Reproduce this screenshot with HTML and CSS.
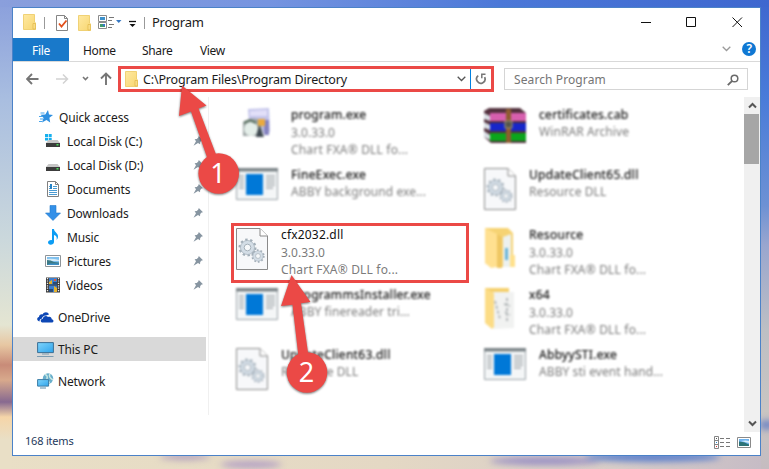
FILE: index.html
```html
<!DOCTYPE html>
<html lang="en">
<head>
<meta charset="utf-8">
<title>Program</title>
<link rel="stylesheet" href="styles.css">
</head>
<body>
<svg class="defs" width="0" height="0" aria-hidden="true">
  <defs>
    <linearGradient id="fold" x1="0" y1="0" x2="1" y2="1"><stop offset="0" stop-color="#ffe9a2"/><stop offset="1" stop-color="#f7d670"/></linearGradient>
    <linearGradient id="scr" x1="0" y1="0" x2="1" y2="1"><stop offset="0" stop-color="#7fd4fb"/><stop offset="1" stop-color="#2fa4ec"/></linearGradient>
    <symbol id="folder" viewBox="0 0 13 16"><path d="M.5.500H11.500V8l1.200 1V15.500H.5z" fill="url(#fold)" stroke="#ecc95f" stroke-width=".8"/><path d="M10 9.500V15h2.400V9.500z" fill="#fbe08a" stroke="#dfb648" stroke-width=".7"/></symbol>
    <symbol id="pin" viewBox="0 0 10 10"><path d="M5.800 0L10 4.200 8.600 4.600 7.200 6.100 7 8.200 5 7 .500 9.800 3 5.200 1.600 3.200 3.800 3 5.300 1.500z" fill="#8795a1"/></symbol>
    <symbol id="gear" viewBox="-10 -10 20 20"><circle r="5.600" fill="none" stroke="#d3dde6" stroke-width="4"/><circle r="8.300" fill="none" stroke="#a3afb9" stroke-width="2.400" stroke-dasharray="2.500 2.710"/><circle r="7.400" fill="none" stroke="#aab6c0" stroke-width=".8"/><circle r="3.500" fill="#f6f8fa" stroke="#99a6b0" stroke-width=".9"/></symbol>
    <symbol id="dll" viewBox="0 0 32 42"><path d="M.5.500H24L31.500 8V41.500H.5z" fill="#f7f8fa" stroke="#8a8a8a"/><path d="M24 .500V8h7.500" fill="#fff" stroke="#8a8a8a"/><use href="#gear" x="2" y="10" width="19" height="19"/><use href="#gear" x="15" y="21" width="14" height="14"/></symbol>
    <symbol id="exe" viewBox="0 0 42 32"><path d="M.5.500h41v31H.5z" fill="#f4f6f7" stroke="#9aa3a8"/><path d="M0 0h42v3.500H0z" fill="#7d8589"/><path d="M10 6h17v21H10z" fill="#0078d7"/><path d="M3 8h5M3 11h5M3 14h5M3 17h5M3 20h5M30 8h9M30 11h9M30 14h9M30 17h9M30 20h7" stroke="#a8aeb2" stroke-width="1.500"/></symbol>
    <symbol id="picture" viewBox="0 0 16 12"><path d="M.5.500h15v11H.5z" fill="#fff" stroke="#8e9499"/><path d="M2 2h12v8H2z" fill="#7fc0ee"/><path d="M2 4q5-1 12 1v1H2z" fill="#d6ecf8"/><path d="M2 5q4 0 7 2l5 .500V10H2z" fill="#3c7a86"/><path d="M5 8.500h9V10H2z" fill="#3d8fc7"/></symbol>
  </defs>
</svg>

<div class="desktop">
  <div class="cloud c1"></div><div class="cloud c2"></div><div class="cloud c3"></div><div class="cloud c4"></div><div class="cloud c5"></div>
  <main class="window">
    <header class="titlebar">
      <svg class="quick" width="130" height="20" viewBox="0 0 130 20">
        <use href="#folder" x="0" y="1" width="13" height="16"/>
        <path d="M21.500 4v12M121.500 4v12" stroke="#999"/>
        <path d="M33.500 2.500h8l3 3v12h-11z" fill="#fff" stroke="#858585"/><path d="M41.500 2.500v3h3" fill="none" stroke="#858585"/><path d="M36 10.500l2.500 3 5-6" fill="none" stroke="#e2501c" stroke-width="1.800"/>
        <use href="#folder" x="55" y="2" width="13" height="16"/>
        <path d="M75.500 2.500h8v6h-8zM75.500 9.500h8v6h-8z" fill="#fff" stroke="#8b8b8b"/><path d="M77 4h5v3h-5z" fill="#3d91cc"/><path d="M77 11h5v3h-5z" fill="#3f9a70"/><path d="M80 11h2v2h-2z" fill="#3974d1"/><path d="M86 4.500h5M85 7.500h4M86 11.500h5M85 14.500h4" stroke="#777"/>
        <path d="M93 7h5.500l-2.750 3z" fill="#3778c2"/><path d="M106 8.500h7" stroke="#111" stroke-width="1.300"/><path d="M106.500 11h6l-3 3z" fill="#111"/>
      </svg>
      <span class="title">Program</span>
      <svg class="controls" width="102" height="14" viewBox="0 0 102 14"><path d="M0 7.500h10M45.500 2.500h9v9h-9zM91.500 2.500l9.500 9.500M101 2.500L91.500 12" fill="none" stroke="#111"/></svg>
    </header>
    <nav class="ribbon">
      <span class="file">File</span><span class="tab home">Home</span><span class="tab share">Share</span><span class="tab view">View</span>
      <svg class="expand" width="9" height="6" viewBox="0 0 9 6"><path d="M.7.800L4.500 4.500 8.300.800" fill="none" stroke="#9a9a9a" stroke-width="1.300"/></svg>
      <span class="help">?</span>
    </nav>
    <div class="addressrow">
      <svg class="arrows" width="87" height="16" viewBox="0 0 87 16">
        <path d="M12.500 8H1.500M6 3L1 8l5 5" fill="none" stroke="#757575" stroke-width="1.900"/>
        <path d="M30 8h11M37 3.500L41.500 8 37 12.500" fill="none" stroke="#d2d2d2" stroke-width="1.500"/>
        <path d="M57 6L59.500 8.500 62 6" fill="none" stroke="#777" stroke-width="1.600"/>
        <path d="M80 14V3M75 7.500l5-5 5 5" fill="none" stroke="#757575" stroke-width="1.900"/>
      </svg>
      <div class="address">
        <svg width="13" height="16"><use href="#folder" width="13" height="16"/></svg>
        <span class="path">C:\Program Files\Program Directory</span>
        <svg class="drop" width="9" height="6" viewBox="0 0 9 6"><path d="M.7.800L4.500 4.500 8.300.800" fill="none" stroke="#555" stroke-width="1.300"/></svg>
        <span class="reload"><svg width="12" height="12" viewBox="0 0 12 12"><path d="M3.200 2.700A4.200 4.200 0 1 0 9.600 4.200" fill="none" stroke="#777" stroke-width="1.700"/><path d="M10.500 1.300H6.800v4" fill="none" stroke="#777" stroke-width="1.500"/></svg></span>
      </div>
      <div class="search"><span>Search Program</span><svg width="12" height="12" viewBox="0 0 12 12"><circle cx="7.500" cy="4.500" r="3.300" fill="none" stroke="#6a6a6a" stroke-width="1.500"/><path d="M5.200 6.800L.8 11.200" stroke="#6a6a6a" stroke-width="1.900"/></svg></div>
    </div>
    <div class="body">
      <aside class="sidebar">
        <div class="row top"><svg width="16" height="16" viewBox="0 0 16 16"><path d="M9 1l1 4.500 4 .500-3.600 2.700.8 4.900-3.700-2.500L3 13.500l1.600-4.600L1.500 5.800l4.800-.3z" fill="#2d8fe0"/><path d="M1.500 4h4M0 7.500h4M1 10h3M0 12.500h3" stroke="#45a4ec" stroke-width="1.200"/></svg><span>Quick access</span></div>
        <div class="row sub"><svg width="16" height="16" viewBox="0 0 16 16"><path d="M0 1h3v3H0zM3.700 1h3v3h-3zM0 4.700h3v2.800H0zM3.700 4.700h3v2.800h-3z" fill="#17b0ee"/><path d="M3.500 7h9L15 10H1z" fill="#c6c6c6"/><path d="M1 10h14v4H1z" fill="#3c3c3c"/><path d="M11.500 11h2v1.500h-2z" fill="#4be05a"/></svg><span>Local Disk (C:)</span><svg class="pin"><use href="#pin"/></svg></div>
        <div class="row sub"><svg width="16" height="16" viewBox="0 0 16 16"><path d="M3.500 7h9L15 10H1z" fill="#c6c6c6"/><path d="M1 10h14v4H1z" fill="#3c3c3c"/><path d="M11.500 11h2v1.500h-2z" fill="#4be05a"/></svg><span>Local Disk (D:)</span><svg class="pin"><use href="#pin"/></svg></div>
        <div class="row sub"><svg width="16" height="16" viewBox="0 0 16 16"><path d="M2.500.500h8l3 3v12h-11z" fill="#fff" stroke="#808080"/><path d="M10.500.500v3h3" fill="none" stroke="#808080"/><path d="M4 5.500h3M8 5.500h4M4 7.500h3M8 7.500h4M4 9.500h8M4 11.500h8M4 13.500h8" stroke="#4b9bd2" stroke-width="1.100"/><path d="M5 3h2v5H5z" fill="#2582c6"/></svg><span>Documents</span><svg class="pin"><use href="#pin"/></svg></div>
        <div class="row sub"><svg width="16" height="16" viewBox="0 0 16 16"><path d="M5 .500h6V8h4.500L8 15.500.500 8H5z" fill="#3390e8" stroke="#2478cb" stroke-width=".6"/></svg><span>Downloads</span><svg class="pin"><use href="#pin"/></svg></div>
        <div class="row sub"><svg width="16" height="16" viewBox="0 0 16 16"><path d="M7 0h2c0 3 4 4 4 7.500 0 1.500-.6 2.700-1.500 3.500 1-3-.7-4.600-2.500-5V13c0 1.700-1.700 2.700-3.300 2.700S3 14.700 3 13.500c0-1.700 2-2.700 4-2.300z" fill="#0c9df4"/></svg><span>Music</span><svg class="pin"><use href="#pin"/></svg></div>
        <div class="row sub"><svg width="16" height="16" viewBox="0 0 16 16"><use href="#picture" y="2" width="16" height="12"/></svg><span>Pictures</span><svg class="pin"><use href="#pin"/></svg></div>
        <div class="row sub videos"><svg width="16" height="16" viewBox="0 0 16 16"><path d="M1 .500h14v15H1z" fill="#3a3a3a"/><path d="M2.500 1v14M13.500 1v14" stroke="#eee" stroke-width="1.300" stroke-dasharray="1.200 1.200"/><path d="M4 1h8v6.500H4zM4 8.500h8V15H4z" fill="#3c7fd0"/><path d="M4 5l3-2v4H4zM9 9l3 2v4H9z" fill="#e7b32c"/><path d="M8 5h4v2.500H8zM4 12h4v3H4z" fill="#294b77"/><path d="M9 2h2v2H9z" fill="#e35a32"/></svg><span>Videos</span><svg class="pin"><use href="#pin"/></svg></div>
        <div class="row top spaced"><svg width="17" height="16" viewBox="0 0 17 16"><path d="M2.500 12.500C-.5 12-.5 8.500 2 8c0-2 2-3 3.500-2.500C7 2.500 11 2.500 12 5.500L9 6.500C6 6.500 5 8.500 5 9.500c-2 .3-2.500 1.500-2.500 3z" fill="#0d47b5"/><path d="M6 13.500c-3 0-3-3.500-.2-3.700C6 7 9.500 6 11 8c2-1 3.800.3 3.700 2.200 2.500.5 2.300 3.300 0 3.300z" fill="#0d47b5"/></svg><span>OneDrive</span></div>
        <div class="row top spaced selected"><svg width="17" height="16" viewBox="0 0 17 16"><path d="M.6 1.600h15.800v10H.6z" fill="url(#scr)" stroke="#3b6f94"/><path d="M5 13h7M0 15.500h16.500" stroke="#7d9cb0" stroke-width="1.100"/></svg><span>This PC</span></div>
        <div class="row top spaced"><svg width="17" height="16" viewBox="0 0 17 16"><circle cx="11" cy="5.500" r="5.200" fill="#68aecb"/><path d="M8 1.500q3 1 2 4t3 4M13 1q-2 3 3 6" stroke="#c9e8e4" fill="none" stroke-width="1.500"/><path d="M.6 6.600h11v6.500H.6z" fill="url(#scr)" stroke="#3b7ca5"/><path d="M3 15h6" stroke="#5c8caa"/></svg><span>Network</span></div>
      </aside>
      <section class="files">
        <article class="item blurred"><svg width="42" height="32" viewBox="0 0 42 32"><path d="M12 1l21-1 1 24-20 2z" fill="#c3c4ea"/><path d="M14 3l17-1v6H14z" fill="#e2dff8"/><path d="M28 12h5v15h-5z" fill="#8583c0"/><path d="M7 14q8-6 18-2l2 16H7z" fill="#9da5a5"/><circle cx="15" cy="21" r="7" fill="#e4eee9"/><path d="M22 11h7v7h-7z" fill="#eaaa3e"/><path d="M23 17l5 12h-8z" fill="#3f4950"/><path d="M8 15l6-3 6 3" stroke="#59705f" stroke-width="2" fill="none"/></svg><div class="text"><b>program.exe</b><i>3.0.33.0</i><span>Chart FXA® DLL fo...</span></div></article>
        <article class="item blurred"><svg width="42" height="36" viewBox="0 0 42 36"><path d="M0 3l5-3h31l6 5v30H7L0 29z" fill="#53313e"/><path d="M6 5h36v8H6z" fill="#d75fae"/><path d="M6 15h36v8H6z" fill="#1726c9"/><path d="M6 25h36v8H6z" fill="#0ba51c"/><path d="M0 5l6 3v5l-6-2zM0 14l6 3v5l-6-2zM0 23l6 4v5l-6-3z" fill="#d9dfe5"/><path d="M22 1h5v34h-5z" fill="#8e5c30"/><path d="M21 13h7v7h-7z" fill="#55554a" stroke="#a29878"/></svg><div class="text two"><b>certificates.cab</b><span>WinRAR Archive</span></div></article>
        <article class="item blurred"><svg width="42" height="32"><use href="#exe"/></svg><div class="text two"><b>FineExec.exe</b><span>ABBY background exe...</span></div></article>
        <article class="item blurred"><svg width="32" height="42"><use href="#dll"/></svg><div class="text two"><b>UpdateClient65.dll</b><span>Resource DLL</span></div></article>
        <article class="item"><svg width="32" height="42"><use href="#dll"/></svg><div class="text"><b>cfx2032.dll</b><i>3.0.33.0</i><span>Chart FXA® DLL fo...</span></div></article>
        <article class="item blurred"><svg width="32" height="42" viewBox="0 0 32 42"><path d="M1 0h23l5 5v22l2 2v10H8L1 35z" fill="#f6d373"/><path d="M19 9l8-3v33h-8z" fill="#edf1ee"/><path d="M21 20h3v12h-3z" fill="#69b4d6"/><path d="M1 0l12 6v33l-6 1-6-5z" fill="#ffe090"/><path d="M13 6l5 3v31h-5z" fill="#efc763"/><path d="M26 27h5v12h-5z" fill="#ffe18c"/></svg><div class="text"><b>Resource</b><i>3.0.33.0</i><span>Chart FXA® DLL fo...</span></div></article>
        <article class="item blurred"><svg width="42" height="32"><use href="#exe"/></svg><div class="text two"><b>ProgrammsInstaller.exe</b><span>ABBY finereader tri...</span></div></article>
        <article class="item blurred"><svg width="32" height="42" viewBox="0 0 32 42"><path d="M1 0h24v5H1z" fill="#f5d06d"/><path d="M8 4h22v36L9 41z" fill="#f1f2f1"/><path d="M11 13l5 18M20 16l6 2M21 24l5 3M23 10v25" stroke="#afb4b6" stroke-width="1.800" stroke-dasharray="3 2"/><path d="M1 0l9 5v34l-2 2-7-6z" fill="#fcdc85"/></svg><div class="text"><b>x64</b><i>3.0.33.0</i><span>Chart FXA® DLL fo...</span></div></article>
        <article class="item blurred"><svg width="32" height="42"><use href="#dll"/></svg><div class="text two"><b>UpdateClient63.dll</b><span>Resource DLL</span></div></article>
        <article class="item blurred"><svg width="42" height="32"><use href="#exe"/></svg><div class="text two"><b>AbbyySTI.exe</b><span>ABBY sti event hand...</span></div></article>
      </section>
      <div class="scroll"><svg width="9" height="7" viewBox="0 0 9 7"><path d="M1 5.500L4.500 2 8 5.500" fill="none" stroke="#555" stroke-width="2"/></svg><div class="thumb"></div><svg class="down" width="9" height="7" viewBox="0 0 9 7"><path d="M1 1.500L4.500 5 8 1.500" fill="none" stroke="#555" stroke-width="2"/></svg></div>
    </div>
    <footer class="status"><span>168 items</span><svg width="38" height="13" viewBox="0 0 38 13"><path d="M.5.500h4v12h-4zM.5 4.500h4M.5 8.500h4" fill="#fff" stroke="#858585"/><path d="M2 2h1v1H2z" fill="#555"/><path d="M2 6h1v1H2z" fill="#2b86d0"/><path d="M2 10h1v1H2z" fill="#d33"/><path d="M6 2.500h4M12 2.500h4M6 6.500h4M12 6.500h4M6 10.500h4M12 10.500h4" stroke="#777"/><path d="M23.500 1.500h13v10h-13z" fill="#fff" stroke="#8a8a8a"/><path d="M25 3h10v7H25z" fill="#6db2ee"/><path d="M25 5.500q5 0 10 3V10H25z" fill="#2c7377"/><path d="M27 5q5-1 8 0v2z" fill="#dbeffa"/></svg></footer>
  </main>
  <div class="highlight"></div>
  <svg class="callouts" width="769" height="469" viewBox="0 0 769 469">
    <g fill="#eb4946"><path d="M182 85.500L206.500 105.500 198.500 108.500 217 157 208 160 191 111.500 179 116z"/><circle cx="218.700" cy="173.500" r="20.300"/></g>
    <g fill="#eb4946"><path d="M291.500 275L310.500 302 301 303.300 308.500 356 298.500 357 292.500 304.700 281 306z"/><circle cx="307" cy="372.500" r="20.300"/></g>
    <text x="218" y="183">1</text><text x="306.500" y="382">2</text>
  </svg>
</div>
</body>
</html>
```
FILE: styles.css
```css
* { box-sizing: border-box; }
body { margin: 0; font: 12px/16px "Noto Sans", "Open Sans", sans-serif; color: #1b1b1b; overflow: hidden; }
svg { display: block; flex: none; }
.defs { position: absolute; }
.desktop {
  position: relative; width: 769px; height: 469px; padding: 7px 8px 13px 12px; overflow: hidden;
  background:
    linear-gradient(90deg, #8a9fdc, #7594e0 35%, #4b78d8 65%, #3e67cf) 0 0 / 100% 7px no-repeat,
    linear-gradient(#8a9fdc, #a9bee0 100px, #cbd8dc 240px, #e4e5d2 325px, #e7c7a2 345px, #c88b78 365px, #d8a98c 380px, #876990 402px, #f5d5a8 417px, #e9dfc6 440px) 0 0 / 12px 100% no-repeat,
    linear-gradient(#3e67cf, #4a7cd9 100px, #6d91d4 205px, #99a6cf 245px, #bdbfc4 330px, #c9c5c2 410px, #c5bcc0) 100% 0 / 8px 100% no-repeat,
    linear-gradient(90deg, #e9dfc6, #e4d8c4 50%, #d8cdc8 80%, #c5bbc5);
}
.cloud { position: absolute; filter: blur(3px); border-radius: 50%; }
.c1 { left: 160px; top: 454px; width: 50px; height: 6px; background: #b2a0bd; }
.c2 { left: 220px; top: 461px; width: 62px; height: 7px; background: #b29fc4; }
.c3 { left: 490px; top: 457px; width: 110px; height: 8px; background: #9990c4; }
.c4 { left: 585px; top: 452px; width: 135px; height: 10px; background: #6183cc; }
.c5 { left: 759px; top: 420px; width: 16px; height: 10px; background: #7589c4; }
.window { position: relative; display: flex; flex-direction: column; width: 749px; height: 449px; background: #fff; border: 1px solid #4b82c8; }
.titlebar { display: flex; height: 30px; padding: 5px 17px 0 10px; }
.title { margin: 1px 0 0 -1px; font-size: 13px; letter-spacing: -.25px; }
.controls { margin: 2px 0 0 auto; width: 102px; }
.ribbon { display: flex; height: 24px; border-bottom: 1px solid #d9d9d9; line-height: 25px; letter-spacing: -.35px; }
.file { width: 56px; background: #1979ca; color: #fff; text-align: center; }
.home { margin-left: 14px; width: 59px; }
.share { width: 58px; }
.expand { margin: 8px 11px 0 auto; }
.help { width: 14px; height: 14px; margin: 4px 4px 0 0; border-radius: 50%; background: #0f78d3; color: #fff; font-weight: 600; line-height: 14px; text-align: center; }
.addressrow { display: flex; height: 35px; padding: 4px 12px 0 13px; }
.arrows { margin: 5px 5px 0 0; }
.address { display: flex; align-items: center; width: 376px; height: 26px; padding-left: 4px; border: 3px solid #eb4946; }
.path { margin: 1px 0 0 5px; font-size: 12.500px; letter-spacing: -.17px; white-space: nowrap; }
.drop { margin: 0 4px 0 auto; }
.reload { display: flex; align-items: center; justify-content: center; width: 21px; height: 20px; border-left: 1px solid #0080e0; }
.search { display: flex; align-items: center; justify-content: space-between; width: 244px; height: 22px; margin: 2px 0 0 10px; padding: 1px 8px 0 9px; border: 1px solid #d5d5d5; color: #757575; letter-spacing: .1px; }
.body { display: flex; height: 335px; }
.sidebar { width: 196px; height: 318px; padding-top: 8px; border-right: 1px solid #f0f0f0; }
.row { display: flex; align-items: center; width: 193px; height: 24px; letter-spacing: -.15px; }
.row span { padding-top: 1px; }
.row.sub { padding: 0 3px 0 32px; gap: 6px; }
.row.top { padding-left: 24px; gap: 4px; }
.row.top:first-child { padding-left: 26px; }
.row.videos { gap: 5px; }
.spaced { margin-top: 8px; }
.selected { background: #d9d9d9; }
.pin { width: 10px; height: 10px; margin-left: auto; }
.files { display: grid; grid-template-columns: 248px 248px; grid-auto-rows: 60px; width: 535px; padding: 6px 0 0 27px; }
.item { display: flex; gap: 13px; padding-top: 5px; }
.blurred { filter: blur(1.300px); }
.text { display: flex; flex-direction: column; margin-top: -1px; color: #7c7c7c; letter-spacing: .18px; white-space: nowrap; }
.text b { font-weight: 400; color: #111; }
.blurred b { letter-spacing: .3px; -webkit-text-stroke: .2px #111; }
.text i { font-style: normal; line-height: 20px; letter-spacing: 0; }
.text span { line-height: 13px; }
.two span { line-height: 17px; letter-spacing: .08px; }
.scroll { display: flex; flex-direction: column; align-items: center; width: 16px; height: 335px; padding: 5px 0; background: #f0f0f0; }
.thumb { width: 15px; height: 50px; margin: 5px 1px 0 0; background: #a6a6a6; }
.down { margin-top: auto; }
.status { display: flex; justify-content: space-between; padding: 4px 8px 0 12px; font-size: 11px; letter-spacing: -.2px; color: #1e395b; }
.status span { margin-top: -3px; }
.highlight { position: absolute; left: 231px; top: 223px; width: 238px; height: 60px; border: 3px solid #eb4946; }
.callouts { position: absolute; left: 0; top: 0; }
.callouts g { filter: drop-shadow(0 1px 1.200px #0008); }
.callouts text { fill: #fff; font: 27px "Noto Sans", sans-serif; text-anchor: middle; }
```
